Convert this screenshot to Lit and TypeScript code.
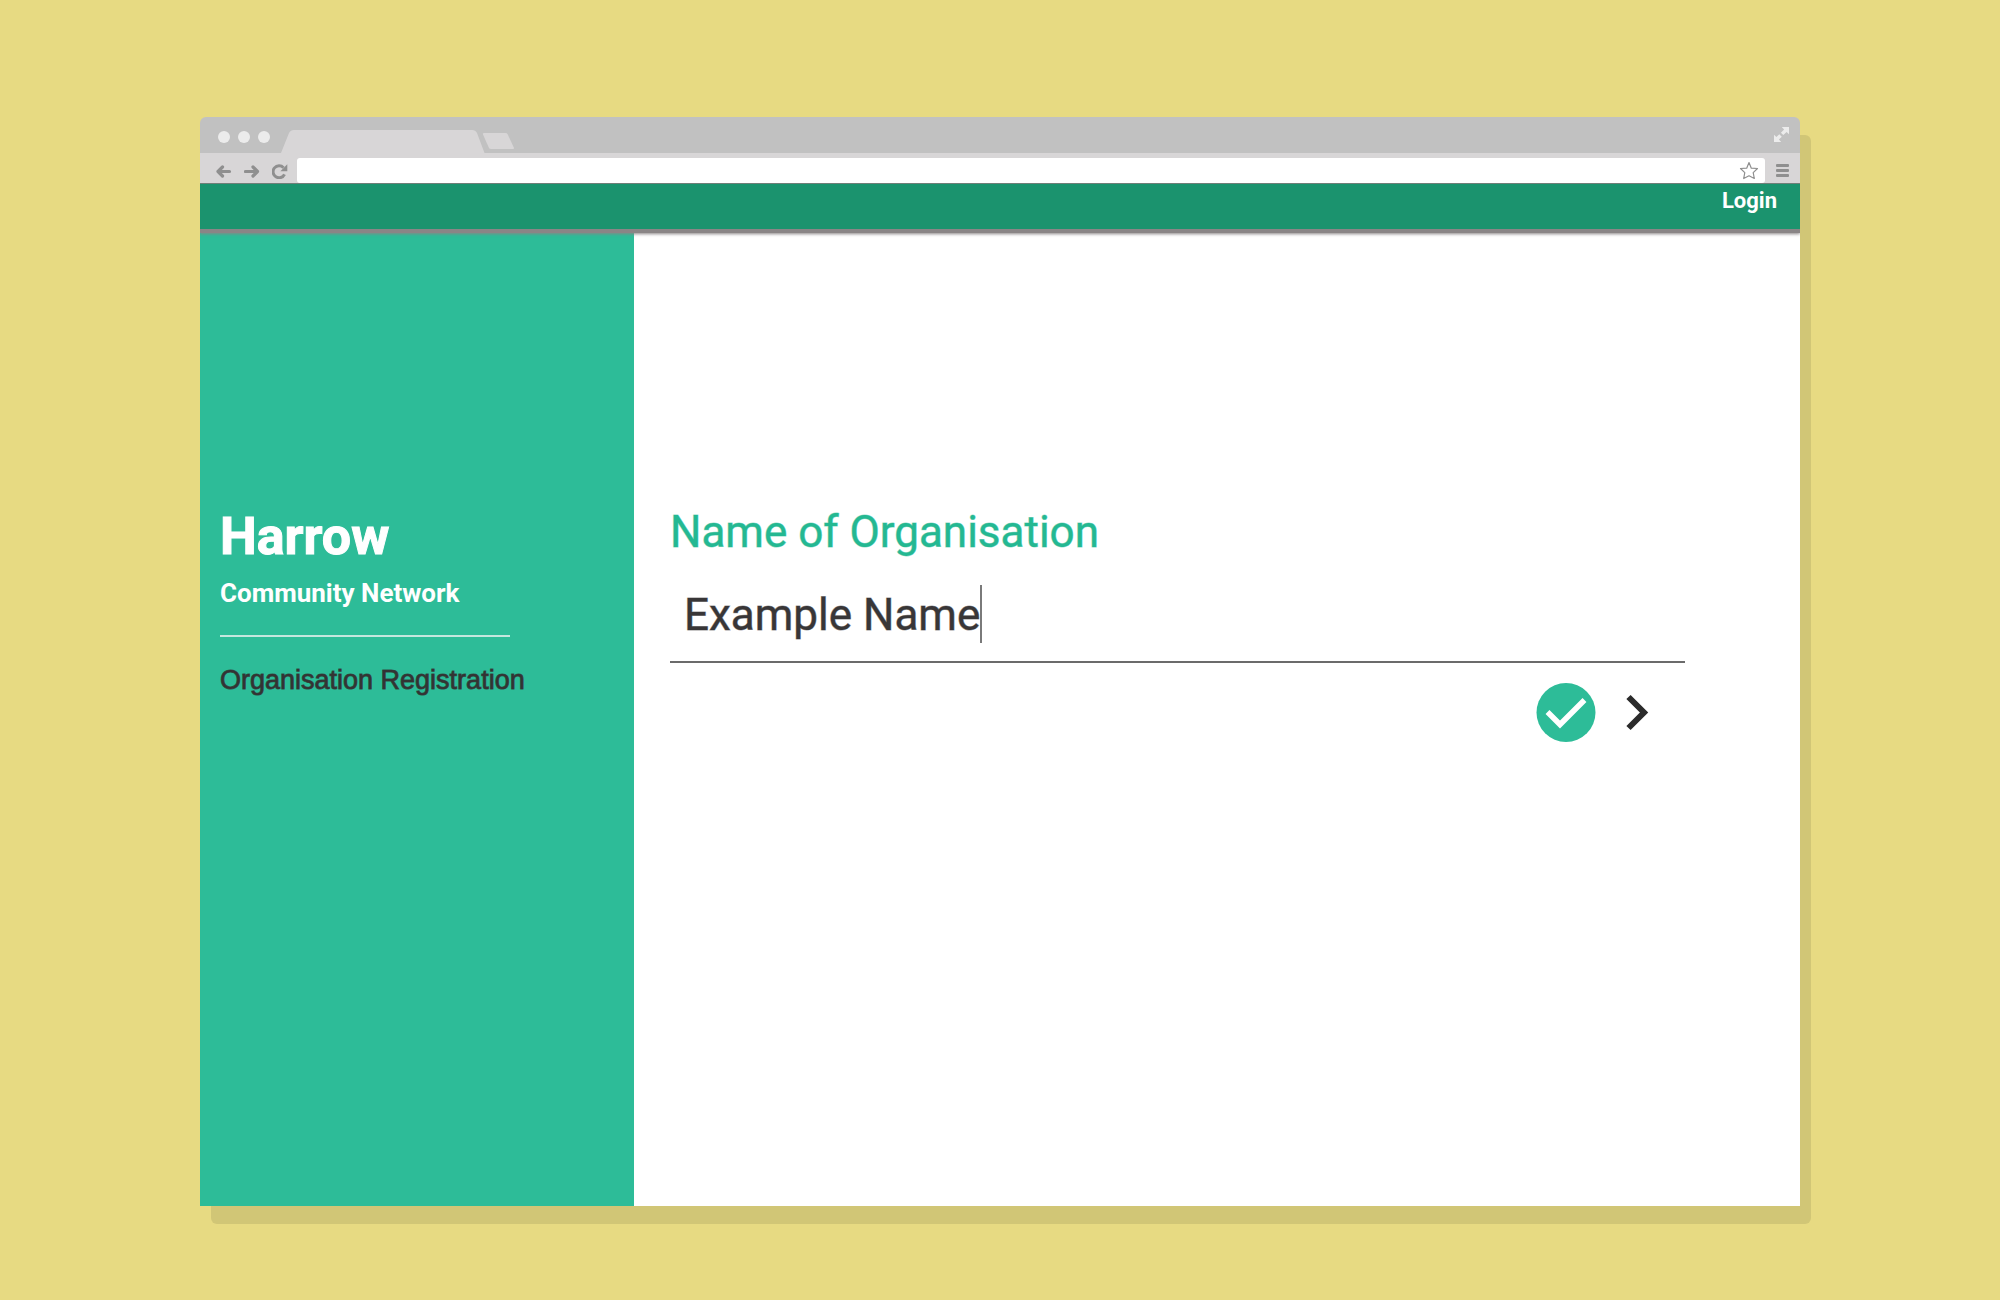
import { LitElement, html, css, svg } from "lit";
import { customElement, state } from "lit/decorators.js";

const backIcon = svg`<path d="M13.500 7.500H2.500M6.500 3L2 7.500L6.500 12" fill="none" stroke="#8f8f8f" stroke-width="3.200" stroke-linecap="round" stroke-linejoin="round"/>`;
const forwardIcon = svg`<path d="M1.500 7.500H13M9 3L13.500 7.500L9 12" fill="none" stroke="#8f8f8f" stroke-width="3.200" stroke-linecap="round" stroke-linejoin="round"/>`;
const reloadIcon = svg`<path d="M11.500 3.700A6 6 0 1 0 12.500 10.300" fill="none" stroke="#8f8f8f" stroke-width="3"/><path d="M15.300 0.300V7.200H8.400Z" fill="#8f8f8f"/>`;

@customElement("browser-chrome")
export class BrowserChrome extends LitElement {
  static styles = css`
    :host {
      display: block;
    }
    .titlebar {
      display: flex;
      align-items: flex-end;
      height: 36px;
      padding: 0 11px 0 18px;
      border-radius: 6px 6px 0 0;
      background: #c1c1c1;
    }
    .lights {
      display: flex;
      gap: 8px;
      padding-bottom: 10px;
    }
    .light {
      width: 12px;
      height: 12px;
      border-radius: 50%;
      background: #ececec;
    }
    .tabs {
      display: block;
      flex: none;
    }
    .expand {
      margin: 0 0 11px auto;
    }
    .toolbar {
      display: flex;
      align-items: center;
      height: 30px;
      padding: 0 11px 0 16px;
      background: #d8d6d7;
      box-sizing: border-box;
    }
    button {
      display: block;
      flex: none;
      padding: 0;
      border: 0;
      background: none;
    }
    svg {
      display: block;
    }
    .nav {
      display: flex;
      gap: 12px;
      padding-top: 7px;
    }
    .omnibox {
      display: flex;
      flex: 1;
      align-items: center;
      height: 25px;
      margin: 5px 11px 0 9px;
      padding-right: 6px;
      border-radius: 3px;
      background: #fff;
    }
    .address {
      flex: 1;
      min-width: 0;
      padding: 0 8px;
      border: 0;
      outline: 0;
      background: none;
      font: 14px/20px Roboto, sans-serif;
    }
    .menu {
      padding-top: 5px;
    }
  `;

  render() {
    return html`
      <div class="titlebar">
        <div class="lights">
          <span class="light"></span><span class="light"></span><span class="light"></span>
        </div>
        <svg class="tabs" width="245" height="24" viewBox="-10 0 245 24" aria-hidden="true">
          <path d="M1 24L9 4Q10.500 1 14 1H192Q195.500 1 197 4L204.500 24Z" fill="#d8d6d7" />
          <path d="M204 4H225.500Q227 4 227.500 5L234 19Q234 20 233 20H211Q209.500 20 209 19L203 5.500Q202.500 4 204 4Z" fill="#d8d6d7" />
        </svg>
        <button class="expand" aria-label="Full screen">
          <svg width="15" height="15" viewBox="0 0 15 15" fill="#ececec">
            <path d="M7.800 0H15V7.200L12.600 4.900L9.300 8.100L6.900 5.700L10.100 2.400Z" />
            <path d="M0 15V7.800L2.400 10.100L5.300 7.200L7.800 9.700L4.900 12.600L7.200 15Z" />
          </svg>
        </button>
      </div>
      <div class="toolbar">
        <div class="nav">
          <button aria-label="Back"><svg width="16" height="15" viewBox="0 0 16 15">${backIcon}</svg></button>
          <button aria-label="Forward"><svg width="16" height="15" viewBox="0 0 16 15">${forwardIcon}</svg></button>
          <button aria-label="Reload"><svg width="16" height="15" viewBox="0 0 16 15">${reloadIcon}</svg></button>
        </div>
        <div class="omnibox">
          <input class="address" type="text" aria-label="Address" />
          <button aria-label="Bookmark">
            <svg width="20" height="20" viewBox="0 0 20 20">
              <path d="M10 1.500L12.300 7.200L18.500 7.500L14.200 11.600L15.300 17.500L10 14.800L4.700 17.500L5.800 11.600L1.500 7.500L7.700 7.200Z" fill="none" stroke="#8f8f8f" stroke-width="1.200" stroke-linejoin="round" />
            </svg>
          </button>
        </div>
        <button class="menu" aria-label="Menu">
          <svg width="13" height="13" viewBox="0 0 13 13" fill="#8f8f8f">
            <rect width="13" height="3" rx="1" />
            <rect y="5" width="13" height="3" rx="1" />
            <rect y="10" width="13" height="3" rx="1" />
          </svg>
        </button>
      </div>
    `;
  }
}

@customElement("registration-page")
export class RegistrationPage extends LitElement {
  @state() private name = "Example Name";

  static styles = css`
    :host {
      display: flex;
      flex-direction: column;
      font-family: Roboto, "Liberation Sans", sans-serif;
    }
    .header {
      position: relative;
      display: flex;
      justify-content: flex-end;
      height: 50px;
      padding: 3px 23px 0;
      border-top: 1px solid #6f7f79;
      border-bottom: 4px solid #8a8586;
      box-shadow: 0 1px 3px #8a8586;
      clip-path: inset(0 0 -6px 0);
      box-sizing: border-box;
      background: #1b936e;
    }
    .login {
      color: #fff;
      font-size: 22px;
      font-weight: 700;
      line-height: 28px;
      text-decoration: none;
    }
    .body {
      display: grid;
      flex: 1;
      grid-template-columns: 217fr 583fr;
    }
    .side {
      padding: 272px 20px 32px;
      background: #2dbc98;
    }
    .brand {
      margin: 0;
      color: #fff;
      font-size: 52px;
      font-weight: 700;
      line-height: 64px;
      -webkit-text-stroke: 1px #fff;
    }
    .tagline {
      margin: 8px 0 0;
      color: #fff;
      font-size: 26px;
      font-weight: 700;
      line-height: 32px;
    }
    .rule {
      width: 290px;
      max-width: 100%;
      height: 2px;
      margin: 26px 0 27px;
      border: 0;
      background: #c4e7de;
    }
    .step {
      margin: 0;
      color: #333;
      font-family: "Liberation Sans", Arial, sans-serif;
      font-size: 27px;
      font-weight: 400;
      line-height: 32px;
      -webkit-text-stroke: 1px rgba(51, 51, 51, 0.8);
    }
    .form {
      padding: 272px 115px 32px 36px;
      background: #fff;
    }
    .label {
      display: block;
      color: #24b892;
      font-size: 44px;
      line-height: 54px;
      -webkit-text-stroke: 1px rgba(36, 184, 146, 0.5);
    }
    .field {
      display: flex;
      align-items: center;
      margin-top: 26px;
      padding: 0 0 18px 14px;
      border-bottom: 2px solid #6b6b6b;
      cursor: text;
    }
    .input {
      field-sizing: content;
      max-width: 100%;
      height: 58px;
      padding: 2px 0 0;
      box-sizing: border-box;
      border: 0;
      outline: 0;
      background: none;
      color: #383637;
      caret-color: transparent;
      font: 44px/56px Roboto, "Liberation Sans", sans-serif;
      -webkit-text-stroke: 1px rgba(56, 54, 55, 0.5);
    }
    .caret {
      width: 2px;
      height: 58px;
      background: #7a7a7a;
    }
    .actions {
      display: flex;
      justify-content: flex-end;
      align-items: center;
      gap: 21px;
      padding: 20px 28px 0 0;
    }
    .action {
      padding: 0;
      border: 0;
      background: none;
      cursor: pointer;
    }
    .action svg {
      display: block;
    }
  `;

  private onInput(e: Event) {
    this.name = (e.target as HTMLInputElement).value;
  }

  render() {
    return html`
      <header class="header"><a class="login" href="#login">Login</a></header>
      <div class="body">
        <aside class="side">
          <h1 class="brand">Harrow</h1>
          <p class="tagline">Community Network</p>
          <hr class="rule" />
          <h2 class="step">Organisation Registration</h2>
        </aside>
        <form class="form" @submit=${(e: Event) => e.preventDefault()}>
          <label class="label" for="org">Name of Organisation</label>
          <label class="field" for="org">
            <input id="org" class="input" type="text" .value=${this.name} @input=${this.onInput} />
            <span class="caret"></span>
          </label>
          <div class="actions">
            <button class="action" type="submit" aria-label="Confirm">
              <svg width="60" height="60" viewBox="0 0 60 60">
                <circle cx="30" cy="29.500" r="29.500" fill="#2dbc98" />
                <path d="M11.500 29L24 41.500L48.500 17" fill="none" stroke="#fff" stroke-width="5.500" />
              </svg>
            </button>
            <button class="action" type="button" aria-label="Next">
              <svg width="40" height="60" viewBox="0 0 40 60">
                <path d="M11.500 14L27 29.500L11.500 45" fill="none" stroke="#2b2b2b" stroke-width="6" />
              </svg>
            </button>
          </div>
        </form>
      </div>
    `;
  }
}

@customElement("app-root")
export class AppRoot extends LitElement {
  static styles = css`
    :host {
      display: flex;
      min-height: 100vh;
      padding: 117px 10% 94px;
      box-sizing: border-box;
      background: #e7da82;
    }
    .window {
      position: relative;
      z-index: 0;
      display: flex;
      flex: 1;
      flex-direction: column;
      min-width: 0;
    }
    .window::before {
      content: "";
      position: absolute;
      z-index: -1;
      inset: 18px -11px -18px 11px;
      border-radius: 6px;
      background: #d1c676;
    }
    .page {
      flex: 1;
    }
  `;

  render() {
    return html`
      <div class="window">
        <browser-chrome></browser-chrome>
        <registration-page class="page"></registration-page>
      </div>
    `;
  }
}
